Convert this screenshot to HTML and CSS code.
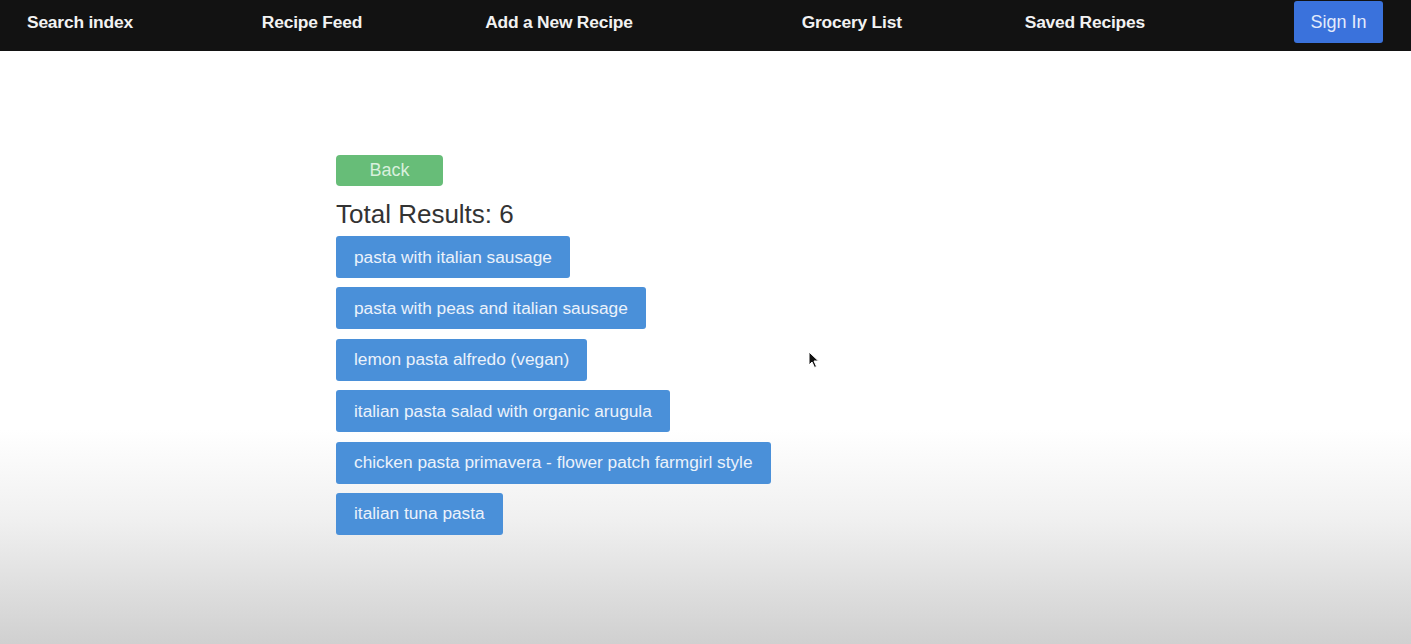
FILE: index.html
```html
<!DOCTYPE html>
<html>
<head>
<meta charset="utf-8">
<link rel="stylesheet" href="styles.css">
</head>
<body>
<nav class="topnav">
  <a class="nav-link nl-search" href="#">Search index</a>
  <a class="nav-link nl-feed" href="#">Recipe Feed</a>
  <a class="nav-link nl-add" href="#">Add a New Recipe</a>
  <a class="nav-link nl-grocery" href="#">Grocery List</a>
  <a class="nav-link nl-saved" href="#">Saved Recipes</a>
  <button class="signin">Sign In</button>
</nav>
<main class="content">
  <button class="back-btn">Back</button>
  <h2 class="total">Total Results: 6</h2>
  <ul class="results">
    <li><button class="result-btn">pasta with italian sausage</button></li>
    <li><button class="result-btn">pasta with peas and italian sausage</button></li>
    <li><button class="result-btn">lemon pasta alfredo (vegan)</button></li>
    <li><button class="result-btn">italian pasta salad with organic arugula</button></li>
    <li><button class="result-btn">chicken pasta primavera - flower patch farmgirl style</button></li>
    <li><button class="result-btn">italian tuna pasta</button></li>
  </ul>
</main>
<svg class="cursor" width="12" height="18" viewBox="0 0 12 18"><path d="M1 1 L1 14 L4 11 L6.5 16.5 L8.5 15.5 L6 10 L10.5 10 Z" fill="#111" stroke="#fff" stroke-width="1"/></svg>
</body>
</html>
```
FILE: styles.css
```css
html {
  min-height: 100%;
  background: linear-gradient(to bottom, #ffffff 0px, #ffffff 430px, #f0f0f0 520px, #d0d0d0 644px);
}
body {
  margin: 0;
  min-height: 644px;
  font-family: "Liberation Sans", Arial, sans-serif;
  position: relative;
}
.topnav {
  display: flex;
  align-items: flex-start;
  height: 51px;
  background: #121212;
  padding-left: 27px;
  box-sizing: border-box;
}
.nav-link {
  color: #f2f2f2;
  text-decoration: none;
  font-weight: bold;
  font-size: 17.4px;
  line-height: 44px;
  letter-spacing: -0.2px;
  white-space: nowrap;
}
.nl-feed { margin-left: 129px; }
.nl-add { margin-left: 123px; }
.nl-grocery { margin-left: 169px; }
.nl-saved { margin-left: 123px; }
.signin {
  margin-left: 149px;
  margin-top: 1px;
  width: 89px;
  height: 42px;
  background: #3a72dc;
  color: #e3ebfb;
  border: none;
  border-radius: 3px;
  font-family: "Liberation Sans", Arial, sans-serif;
  font-size: 18px;
  padding: 0;
}
.content {
  padding-left: 336px;
  padding-top: 104px;
  display: flex;
  flex-direction: column;
  align-items: flex-start;
}
.back-btn {
  width: 107px;
  height: 31px;
  background: #67bd78;
  color: #d8f0dd;
  border: none;
  border-radius: 4px;
  font-family: "Liberation Sans", Arial, sans-serif;
  font-size: 18px;
  padding: 0;
}
.total {
  margin: 13px 0 7px 0;
  font-size: 26px;
  line-height: 30px;
  font-weight: normal;
  color: #333;
}
.results {
  list-style: none;
  margin: 0;
  padding: 0;
  display: flex;
  flex-direction: column;
  align-items: flex-start;
  gap: 9.4px;
}
.result-btn {
  height: 42px;
  padding: 0 18px;
  background: #4a90d9;
  color: #eaf2fb;
  border: none;
  border-radius: 3px;
  font-family: "Liberation Sans", Arial, sans-serif;
  font-size: 17.3px;
}
.cursor {
  position: absolute;
  left: 808px;
  top: 351px;
}
```
